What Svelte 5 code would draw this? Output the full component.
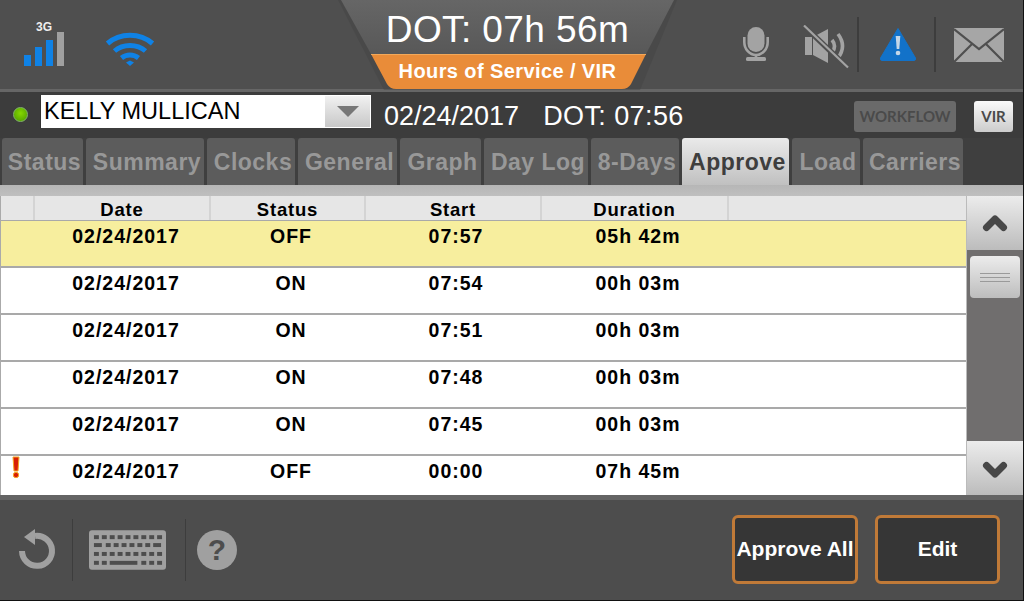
<script>
	const tabs = [
		{ label: 'Status', w: 81 },
		{ label: 'Summary', w: 118 },
		{ label: 'Clocks', w: 88 },
		{ label: 'General', w: 99 },
		{ label: 'Graph', w: 81 },
		{ label: 'Day Log', w: 104 },
		{ label: '8-Days', w: 88 },
		{ label: 'Approve', w: 107, active: true },
		{ label: 'Load', w: 68 },
		{ label: 'Carriers', w: 100 }
	];

	const columns = [
		{ label: '', w: 34 },
		{ label: 'Date', w: 176 },
		{ label: 'Status', w: 155 },
		{ label: 'Start', w: 176 },
		{ label: 'Duration', w: 187 }
	];

	const rows = [
		{ date: '02/24/2017', status: 'OFF', start: '07:57', duration: '05h 42m', selected: true },
		{ date: '02/24/2017', status: 'ON', start: '07:54', duration: '00h 03m' },
		{ date: '02/24/2017', status: 'ON', start: '07:51', duration: '00h 03m' },
		{ date: '02/24/2017', status: 'ON', start: '07:48', duration: '00h 03m' },
		{ date: '02/24/2017', status: 'ON', start: '07:45', duration: '00h 03m' },
		{ date: '02/24/2017', status: 'OFF', start: '00:00', duration: '07h 45m', flagged: true }
	];

	// keyboard icon key rows: [x, y, width]
	const keys = [];
	for (let i = 0; i < 9; i++) keys.push([5 + i * 8, 5, 5]);
	keys.push([5, 13, 8]);
	for (let i = 0; i < 6; i++) keys.push([17 + i * 8, 13, 5]);
	keys.push([65, 13, 8]);
	for (let i = 0; i < 9; i++) keys.push([5 + i * 8, 22, 5]);
	keys.push([5, 31, 5], [13, 31, 5], [21, 31, 28], [53, 31, 5], [61, 31, 5], [69, 31, 5]);
</script>

<div class="screen">
	<header class="top">
		<div class="signal">
			<span class="net">3G</span>
			<svg width="42" height="36" viewBox="0 0 42 36">
				<rect x="0" y="23" width="7" height="11" fill="#0f82e6" />
				<rect x="11" y="15" width="7" height="19" fill="#0f82e6" />
				<rect x="22" y="8" width="7" height="26" fill="#0f82e6" />
				<rect x="33" y="0" width="7" height="34" fill="#a0a0a0" />
			</svg>
		</div>
		<svg class="wifi" width="50" height="36" viewBox="0 0 50 36" fill="none" stroke="#0f82e6" stroke-width="5">
			<path d="M2.5 12.5 C15 1.5 35 1.5 47.5 12.5" />
			<path d="M9.5 20 C18 12.5 32 12.5 40.5 20" />
			<path d="M16.5 27 C21.5 23 28.5 23 33.5 27" />
			<path d="M21 31.5 L25 29.5 L29 31.5 L25 35 Z" fill="#0f82e6" stroke="none" />
		</svg>

		<div class="status-icons">
			<svg class="mic" width="26" height="35" viewBox="0 0 26 35">
				<rect x="4.5" y="0" width="17" height="25" rx="8.5" fill="#a3a3a3" />
				<path d="M1.3 10 V15 A11.7 13 0 0 0 24.7 15 V10" fill="none" stroke="#a3a3a3" stroke-width="2.6" />
				<rect x="11.7" y="27" width="2.6" height="6" fill="#a3a3a3" />
				<rect x="3" y="30" width="20" height="4" rx="1.5" fill="#a3a3a3" />
			</svg>
			<svg class="mute" width="46" height="44" viewBox="0 0 46 44">
				<rect x="2" y="12" width="7" height="18" fill="#a3a3a3" />
				<path d="M10 12 L25 4 V38 L10 30 Z" fill="#a3a3a3" />
				<path d="M29 15 Q34 21 29 28 M35 9 Q44 21 35 33" fill="none" stroke="#a3a3a3" stroke-width="3.6" />
				<path d="M0 0 L44 42" stroke="#4f4f4f" stroke-width="5.5" />
				<path d="M1 0.5 L45 42.5" stroke="#a3a3a3" stroke-width="2.2" />
			</svg>
			<span class="sep"></span>
			<svg class="warn" width="38" height="34" viewBox="0 0 38 34">
				<path d="M19 1.5 L36.5 31 Q37 33.5 35 33.5 H3 Q1 33.5 1.5 31 Z" fill="#1272c9" stroke="#1272c9" stroke-linejoin="round" />
				<path d="M16.7 9 H21.3 L20.3 22 H17.7 Z" fill="#c4d7e8" />
				<circle cx="19" cy="26" r="2.3" fill="#c4d7e8" />
			</svg>
			<span class="sep second"></span>
			<svg class="mail" width="50" height="34" viewBox="0 0 50 34">
				<rect width="50" height="34" fill="#a6a6a6" />
				<path d="M0 1 L25 21 L50 1 M0 34 L18 16 M50 34 L32 16" fill="none" stroke="#4f4f4f" stroke-width="2.2" />
			</svg>
		</div>

		<div class="clock">
			<svg class="clock-bg" width="340" height="90" viewBox="0 0 340 90">
				<defs>
					<linearGradient id="clockfill" x1="0" y1="0" x2="0" y2="1">
						<stop offset="0" stop-color="#666" />
						<stop offset="1" stop-color="#585858" />
					</linearGradient>
				</defs>
				<path d="M0 0 H339 L302 90 H46 Z" fill="#3f3f3f" opacity="0.35" />
				<path d="M3 0 H336 L308 54 H33 Z" fill="url(#clockfill)" />
				<path d="M33 54 H308 L293 84 Q290 89 284 89 H58 Q52 89 49 84 Z" fill="#e98c39" />
				<path d="M33 54.5 H308" stroke="#f3a859" stroke-width="1" />
			</svg>
			<div class="dot">DOT: 07h 56m</div>
			<div class="hos">Hours of Service / VIR</div>
		</div>
	</header>

	<div class="driver">
		<span class="led"></span>
		<div class="select">
			<span class="name">KELLY MULLICAN</span>
			<span class="drop"><span class="arrow"></span></span>
		</div>
		<span class="today">02/24/2017</span>
		<span class="today dot-left">DOT: 07:56</span>
		<button class="workflow">WORKFLOW</button>
		<button class="vir">VIR</button>
	</div>

	<nav class="tabs">
		{#each tabs as tab}
			<div class="tab" class:active={tab.active} style="width: {tab.w}px">{tab.label}</div>
		{/each}
	</nav>
	<div class="strip"></div>

	<main class="content">
		<section class="table">
			<div class="thead">
				{#each columns as col}
					<div class="th" style="width: {col.w}px">{col.label}</div>
				{/each}
			</div>
			{#each rows as row}
				<div class="row" class:selected={row.selected}>
					{#if row.flagged}
						<svg class="flag" width="12" height="24" viewBox="0 0 12 24">
							<path d="M3 1 H9 L8 15 H4 Z" fill="#d81e05" stroke="#f5a623" stroke-width="1" />
							<circle cx="6" cy="19" r="2.7" fill="#d81e05" stroke="#f5a623" stroke-width="1" />
						</svg>
					{/if}
					<span></span>
					<span>{row.date}</span>
					<span>{row.status}</span>
					<span>{row.start}</span>
					<span>{row.duration}</span>
				</div>
			{/each}
		</section>

		<aside class="scroll">
			<div class="scroll-btn up">
				<svg width="26" height="20" viewBox="0 0 26 20">
					<path d="M4.5 14.5 L13 6 L21.5 14.5" fill="none" stroke="#474747" stroke-width="7" stroke-linecap="round" stroke-linejoin="round" />
				</svg>
			</div>
			<div class="track">
				<div class="thumb">
					<span></span><span></span><span></span>
				</div>
			</div>
			<div class="scroll-btn down">
				<svg width="26" height="20" viewBox="0 0 26 20">
					<path d="M4.5 5.5 L13 14 L21.5 5.5" fill="none" stroke="#474747" stroke-width="7" stroke-linecap="round" stroke-linejoin="round" />
				</svg>
			</div>
		</aside>
	</main>

	<footer class="bottom">
		<svg class="undo" width="38" height="42" viewBox="0 0 38 42">
			<path d="M17 7 A15 15 0 1 1 4 22" fill="none" stroke="#a0a0a0" stroke-width="6" />
			<path d="M17 0 V16 L6 8 Z" fill="#a0a0a0" />
		</svg>
		<span class="sep first"></span>
		<svg class="keyboard" width="77" height="40" viewBox="0 0 78 40">
			<rect width="78" height="40" rx="3" fill="#a0a0a0" />
			{#each keys as k}
				<rect x={k[0]} y={k[1]} width={k[2]} height="4" fill="#4d4d4d" />
			{/each}
		</svg>
		<span class="sep"></span>
		<div class="help">?</div>
		<button class="action approve">Approve All</button>
		<button class="action edit">Edit</button>
	</footer>
</div>

<style>
	:global(body) {
		margin: 0;
		background: #111;
	}

	.screen {
		width: 1023px;
		height: 600px;
		overflow: hidden;
		font-family: 'Liberation Sans', Arial, sans-serif;
		background: #3f3f3f;
	}

	.top {
		position: relative;
		display: flex;
		align-items: flex-start;
		height: 89px;
		background: #4f4f4f;
		border-bottom: 3px solid #666;
	}

	.signal {
		position: relative;
		margin: 32px 0 0 24px;
		width: 42px;
		height: 36px;
	}

	.net {
		position: absolute;
		top: -12px;
		left: 12px;
		font-size: 12px;
		font-weight: bold;
		color: #eee;
	}

	.wifi {
		margin: 31px 0 0 39px;
	}

	.status-icons {
		display: flex;
		align-items: flex-start;
		margin-left: auto;
	}

	.mic {
		margin-top: 27px;
		margin-right: 34px;
	}

	.mute {
		margin-top: 25px;
		margin-right: 8px;
	}

	.sep {
		width: 2px;
		height: 55px;
		margin-top: 17px;
		background: #3d3d3d;
	}

	.warn {
		margin: 27px 17px 0 20px;
	}

	.sep.second {
		margin-right: 18px;
	}

	.mail {
		margin: 28px 19px 0 0;
	}

	.clock {
		position: absolute;
		top: 0;
		left: 338px;
		width: 340px;
		height: 89px;
		text-align: center;
	}

	.clock-bg {
		position: absolute;
		top: 0;
		left: 0;
	}

	.dot {
		position: relative;
		margin-left: -1px;
		padding-top: 9px;
		height: 45px;
		line-height: 42px;
		font-size: 37px;
		letter-spacing: 0.4px;
		color: #fff;
	}

	.hos {
		position: relative;
		margin-left: -1px;
		line-height: 34px;
		font-size: 20px;
		font-weight: bold;
		letter-spacing: 0.4px;
		color: #fff;
	}

	.driver {
		display: flex;
		align-items: center;
		height: 46px;
		background: #3c3c3c;
	}

	.led {
		width: 15px;
		height: 15px;
		margin-left: 13px;
		margin-top: -1px;
		border-radius: 50%;
		background: radial-gradient(circle at 50% 40%, #86d800, #4b9a00);
		border: 1px solid #83b46a;
		box-sizing: border-box;
	}

	.select {
		display: flex;
		width: 331px;
		height: 33px;
		margin-left: 12px;
		margin-top: -7px;
		background: #fff;
		border-left: 1px solid #333;
		box-sizing: border-box;
	}

	.name {
		flex: 1;
		padding-left: 3px;
		line-height: 32px;
		font-size: 23.5px;
		color: #000;
	}

	.drop {
		display: flex;
		align-items: center;
		justify-content: center;
		width: 45px;
		margin: 1px 1px 1px 0;
		background: linear-gradient(#f1f1f1, #c8c8c8);
	}

	.arrow {
		width: 0;
		height: 0;
		border-left: 11px solid transparent;
		border-right: 11px solid transparent;
		border-top: 11px solid #777;
	}

	.today {
		margin-left: 13px;
		margin-top: 2px;
		font-size: 27px;
		color: #fff;
	}

	.today.dot-left {
		margin-left: 24px;
		letter-spacing: 0.4px;
	}

	.workflow,
	.vir {
		height: 31px;
		padding: 0;
		margin-top: 2px;
		border: 0;
		border-radius: 3px;
		font-family: Lato, sans-serif;
		font-weight: bold;
		font-size: 15px;
	}

	.workflow {
		width: 102px;
		margin-left: auto;
		background: #6a6a6a;
		color: #4a4a4a;
	}

	.vir {
		width: 39px;
		margin: 2px 10px 0 18px;
		background: linear-gradient(#fafafa, #ccc);
		color: #4a4a4a;
	}

	.tabs {
		display: flex;
		gap: 3px;
		height: 47px;
		padding-left: 2px;
		background: #3f3f3f;
	}

	.tab {
		box-sizing: border-box;
		padding-left: 4px;
		text-align: center;
		line-height: 49px;
		font-size: 23px;
		font-weight: bold;
		letter-spacing: 0.5px;
		color: #989898;
		background: #5c5c5c;
		border-radius: 3px 3px 0 0;
		white-space: nowrap;
	}

	.tab.active {
		color: #3e3e3e;
		background: linear-gradient(#eaeaea, #c0c0c0);
	}

	.strip {
		height: 11px;
		background: linear-gradient(#b6b6b6, #bfbfbf);
	}

	.content {
		display: flex;
		height: 299px;
	}

	.table {
		width: 966px;
		overflow: hidden;
		background: #fff;
		border-left: 1px solid #aaa;
		box-sizing: border-box;
	}

	.thead {
		display: flex;
		height: 24px;
		background: #e6e6e6;
		border-bottom: 1px solid #a9a9a9;
		box-sizing: content-box;
	}

	.th {
		box-sizing: border-box;
		text-align: center;
		padding-top: 2px;
		line-height: 24px;
		font-size: 18.5px;
		font-weight: bold;
		letter-spacing: 0.8px;
		color: #000;
		border-right: 2px solid #d4d4d4;
	}

	.th:first-child {
		width: 34px;
	}

	.row {
		position: relative;
		display: grid;
		grid-template-columns: 33px 184px 146px 184px 180px;
		height: 45px;
		padding-top: 0;
		border-bottom: 2px solid #a9a9a9;
		text-align: center;
		line-height: 31px;
		font-size: 19.5px;
		font-weight: bold;
		letter-spacing: 1px;
		color: #000;
	}

	.row.selected {
		background: #f7ee9e;
	}

	.flag {
		position: absolute;
		top: 0;
		left: 9px;
	}

	.scroll {
		display: flex;
		flex-direction: column;
		flex: 1;
		background: #706e6e;
		border-left: 1px solid #bbb;
	}

	.scroll-btn {
		display: flex;
		align-items: center;
		justify-content: center;
		height: 54px;
		background: linear-gradient(#ececec, #bcbcbc);
	}

	.scroll-btn.down svg {
		margin-top: 4px;
	}

	.track {
		flex: 1;
		padding: 6px 3px 0;
	}

	.thumb {
		display: flex;
		flex-direction: column;
		justify-content: center;
		align-items: center;
		gap: 3px;
		height: 42px;
		border-radius: 4px;
		background: linear-gradient(#ececec, #bdbdbd);
	}

	.thumb span {
		width: 30px;
		height: 1px;
		background: #9a9a9a;
	}

	.bottom {
		display: flex;
		align-items: center;
		height: 99px;
		padding-bottom: 1px;
		border-top: 5px solid #646464;
		background: #4d4d4d;
		box-sizing: content-box;
	}

	.undo {
		margin-left: 18px;
		margin-right: 16px;
	}

	.bottom .sep {
		margin: 0;
		height: 62px;
		background: #3d3d3d;
		width: 1px;
	}

	.keyboard {
		margin: 0 19px 0 16px;
	}

	.help {
		width: 40px;
		height: 40px;
		margin-left: 11px;
		border-radius: 50%;
		background: #a0a0a0;
		text-align: center;
		line-height: 40px;
		font-size: 30px;
		font-weight: bold;
		color: #4d4d4d;
	}

	.action {
		height: 69px;
		padding: 0 0 2px;
		border: 3px solid #c07a38;
		border-radius: 6px;
		background: #363636;
		font-family: 'Liberation Sans', Arial, sans-serif;
		font-size: 21px;
		font-weight: bold;
		color: #fff;
		white-space: nowrap;
	}

	.approve {
		width: 126px;
		margin-left: auto;
	}

	.edit {
		width: 125px;
		margin: 0 23px 0 17px;
	}
</style>
